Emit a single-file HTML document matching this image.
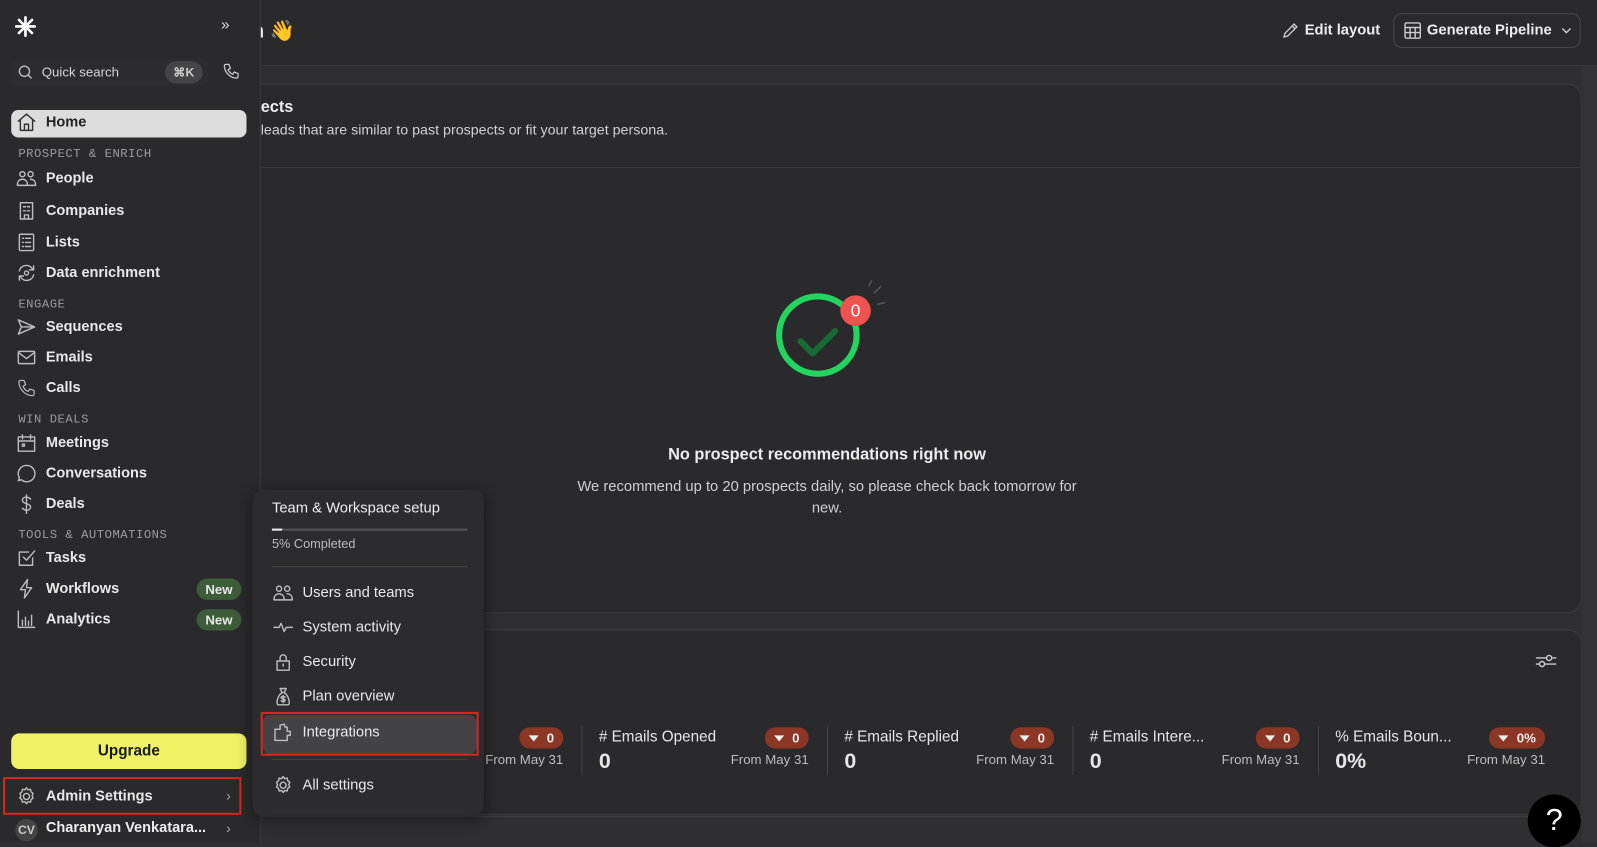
<!DOCTYPE html>
<html><head><meta charset="utf-8"><style>
*{margin:0;padding:0;box-sizing:border-box}
html,body{width:1597px;height:842px;overflow:hidden;background:#2f2f31}
#w{position:absolute;left:0;top:0;width:1568px;height:827px;transform:scale(1.0185);transform-origin:0 0;font-family:"Liberation Sans",sans-serif;color:#ececec;background:#2f2f31}
.a{position:absolute}
.top{left:0;top:0;width:1568px;height:65px;background:#2a2a2c;border-bottom:1px solid #3a3a3c}
.card{background:#2a2a2c;border:1px solid #3a3a3c;border-radius:14px}
.side{left:0;top:0;width:256px;height:827px;background:#2a2a2c;border-right:1px solid #3c3c3e}
.it{position:absolute;left:16px;height:22px;display:flex;align-items:center;font-size:14.3px;font-weight:bold;color:#e8e8e8;white-space:nowrap}
.it svg{width:20px;height:20px;margin-right:9px;fill:none;stroke:#bdbdbd;stroke-width:1.4;stroke-linecap:round;stroke-linejoin:round}
.sec{position:absolute;left:18px;font-family:"Liberation Mono",monospace;font-size:12px;color:#9c9c9c;letter-spacing:.5px}
.new{position:absolute;left:193px;width:44px;height:21px;border-radius:11px;background:#3d5c3a;color:#e6e6e6;font-size:13px;font-weight:bold;display:flex;align-items:center;justify-content:center}
.mi{position:absolute;left:268px;height:22px;display:flex;align-items:center;font-size:14.5px;color:#e8e8e8}
.mi svg{width:20px;height:20px;margin-right:9px;fill:none;stroke:#bdbdbd;stroke-width:1.4;stroke-linecap:round;stroke-linejoin:round}
.st{position:absolute;top:712px;width:206px;height:50px}
.st .t{position:absolute;left:0;top:3px;font-size:15px;color:#e6e6e6}
.st .v{position:absolute;left:0;top:24px;font-size:21px;font-weight:bold;color:#e6e6e6}
.st .b{position:absolute;right:0;top:2px;height:21px;padding:0 9px;border-radius:11px;background:#8c3626;color:#eee;font-size:13px;font-weight:bold;display:flex;align-items:center;gap:8px}
.st .b i{width:0;height:0;border-left:5px solid transparent;border-right:5px solid transparent;border-top:6px solid #eee}
.st .f{position:absolute;right:0;top:26px;font-size:13px;color:#bdbdbd}
.sep{position:absolute;top:713px;width:1px;height:48px;background:#444}
</style></head><body><div id="w">
<div class="a top"></div>
<div class="a" style="left:1553px;top:66px;width:15px;height:761px;background:#333335"></div>
<div class="a" style="left:236px;top:18px;font-size:20px;font-weight:bold">an 👋</div>
<div class="a" style="left:1258px;top:21px;font-size:14.5px;font-weight:bold;display:flex;align-items:center;gap:5px"><svg width="18" height="18" viewBox="0 0 20 20" fill="none" stroke="#ccc" stroke-width="1.5"><path d="M3 17l1-4L14 3l3 3L7 16z M12 5l3 3"/></svg>Edit layout</div>
<div class="a" style="left:1368px;top:13px;width:184px;height:34px;border:1px solid #4a4a4c;border-radius:8px;display:flex;align-items:center;padding-left:9px;font-size:14.5px;font-weight:bold;gap:5px;white-space:nowrap"><svg width="18" height="18" viewBox="0 0 18 18" fill="none" stroke="#ccc" stroke-width="1.4"><rect x="1.5" y="1.5" width="15" height="15" rx="1.5"/><path d="M1.5 6h15M1.5 11h15M6.5 6v10.5M11.5 6v10.5"/></svg>Generate Pipeline <svg width="10" height="6" viewBox="0 0 10 6" style="margin-left:4px" fill="none" stroke="#ccc" stroke-width="1.4"><path d="M1 1l4 4 4-4"/></svg></div>

<div class="a card" style="left:230px;top:82px;width:1323px;height:520px"></div>
<div class="a" style="left:231px;top:164px;width:1321px;height:1px;background:#3a3a3c"></div>
<div class="a" style="left:256px;top:97px;font-size:16px;font-weight:bold">ects</div>
<div class="a" style="left:256px;top:119px;font-size:14px;color:#d0d0d0">leads that are similar to past prospects or fit your target persona.</div>
<svg class="a" style="left:755px;top:275px" width="120" height="100" viewBox="0 0 120 100"><circle cx="48" cy="54" r="38" fill="none" stroke="#22d55f" stroke-width="6"/><path d="M31 60l12 12 22-22" fill="none" stroke="#176c36" stroke-width="6" stroke-linecap="round" stroke-linejoin="round"/><path d="M103 13l7-7M106 24l8-2M98 6l3-6" stroke="#555" stroke-width="1.5"/><circle cx="85" cy="30" r="15" fill="#ef5350"/><text x="85" y="36" font-family="Liberation Sans" font-size="17" fill="#fff" text-anchor="middle">0</text></svg>
<div class="a" style="left:560px;top:438px;width:504px;text-align:center;font-size:16px;font-weight:bold">No prospect recommendations right now</div>
<div class="a" style="left:555px;top:468px;width:514px;text-align:center;font-size:14.5px;color:#cfcfcf;line-height:21px">We recommend up to 20 prospects daily, so please check back tomorrow for new.</div>

<div class="a card" style="left:230px;top:618px;width:1323px;height:182px"></div>
<div class="a" style="left:230px;top:801px;width:1323px;height:1px;background:#3f3f41"></div>
<svg class="a" style="left:1507px;top:640px" width="22" height="18" viewBox="0 0 22 18" fill="none" stroke="#ccc" stroke-width="1.4"><path d="M1 6h10M17 6h4M1 12h3M10 12h11"/><circle cx="14" cy="6" r="2.5"/><circle cx="7" cy="12" r="2.5"/></svg>
<div class="st" style="left:347px"><div class="b"><i></i>0</div><div class="f">From May 31</div></div>
<div class="sep" style="left:571px"></div>
<div class="st" style="left:588px"><div class="t"># Emails Opened</div><div class="v">0</div><div class="b"><i></i>0</div><div class="f">From May 31</div></div>
<div class="sep" style="left:812px"></div>
<div class="st" style="left:829px"><div class="t"># Emails Replied</div><div class="v">0</div><div class="b"><i></i>0</div><div class="f">From May 31</div></div>
<div class="sep" style="left:1053px"></div>
<div class="st" style="left:1070px"><div class="t"># Emails Intere...</div><div class="v">0</div><div class="b"><i></i>0</div><div class="f">From May 31</div></div>
<div class="sep" style="left:1294px"></div>
<div class="st" style="left:1311px"><div class="t">% Emails Boun...</div><div class="v">0%</div><div class="b"><i></i>0%</div><div class="f">From May 31</div></div>
<div class="a" style="left:1500px;top:780px;width:52px;height:52px;border-radius:50%;background:#000;color:#fff;font-size:30px;display:flex;align-items:center;justify-content:center">?</div>

<div class="a side"></div>
<svg class="a" style="left:14px;top:15px" width="22" height="22" viewBox="0 0 22 22" stroke="#fff" stroke-width="2.6" stroke-linecap="round"><path d="M11 2v18M2 11h18M4.6 4.6l12.8 12.8M17.4 4.6L4.6 17.4"/></svg>
<div class="a" style="left:217px;top:16px;font-size:15px;color:#ddd">»</div>
<div class="a" style="left:10px;top:57px;width:195px;height:28px;border-radius:8px;background:#2c2c2e"></div>
<svg class="a" style="left:17px;top:63px" width="16" height="16" viewBox="0 0 16 16" fill="none" stroke="#bbb" stroke-width="1.4"><circle cx="7" cy="7" r="5"/><path d="M11 11l3 3"/></svg>
<div class="a" style="left:41px;top:63px;font-size:13px;color:#d5d5d5">Quick search</div>
<div class="a" style="left:162px;top:60px;width:37px;height:22px;border-radius:11px;background:#454547;font-size:12px;font-weight:bold;color:#ccc;display:flex;align-items:center;justify-content:center">⌘K</div>
<svg class="a" style="left:218px;top:61px" width="18" height="18" viewBox="0 0 24 24" fill="none" stroke="#ccc" stroke-width="1.6"><path d="M5 3h4l2 5-3 2a11 11 0 006 6l2-3 5 2v4a2 2 0 01-2 2A17 17 0 013 5a2 2 0 012-2z"/></svg>
<div class="a" style="left:11px;top:108px;width:231px;height:27px;border-radius:7px;background:#dcdcdc"></div>
<div class="it" style="top:109px;color:#222"><svg viewBox="0 0 20 20" style="stroke:#333"><path d="M2 9l8-7 8 7M4 7.5V18h12V7.5M8 18v-6h4v6"/></svg>Home</div>
<div class="sec" style="top:144px">PROSPECT &amp; ENRICH</div>
<div class="it" style="top:164px"><svg viewBox="0 0 20 20"><circle cx="6" cy="6" r="2.5"/><circle cx="14" cy="6" r="2.5"/><path d="M1 17c0-4 2-6 5-6s5 2 5 6zM11 17h8c0-4-2-6-5-6"/></svg>People</div>
<div class="it" style="top:196px"><svg viewBox="0 0 20 20"><rect x="4" y="2" width="12" height="16"/><path d="M7 6h2M11 6h2M7 10h2M11 10h2M8 18v-4h4v4"/></svg>Companies</div>
<div class="it" style="top:227px"><svg viewBox="0 0 20 20"><rect x="3" y="2" width="14" height="16" rx="1"/><path d="M6 6h1M9 6h5M6 10h1M9 10h5M6 14h1M9 14h5"/></svg>Lists</div>
<div class="it" style="top:257px"><svg viewBox="0 0 20 20"><path d="M3 8a7 7 0 0112-3l2 2M17 12a7 7 0 01-12 3l-2-2M17 3v4h-4M3 17v-4h4"/><circle cx="10" cy="10" r="2"/></svg>Data enrichment</div>
<div class="sec" style="top:292px">ENGAGE</div>
<div class="it" style="top:310px"><svg viewBox="0 0 20 20"><path d="M2 3l16 7-16 7 3-7zM5 10h13"/></svg>Sequences</div>
<div class="it" style="top:340px"><svg viewBox="0 0 20 20"><rect x="2" y="4" width="16" height="12" rx="1"/><path d="M2 5l8 6 8-6"/></svg>Emails</div>
<div class="it" style="top:370px"><svg viewBox="0 0 24 24"><path d="M5 3h4l2 5-3 2a11 11 0 006 6l2-3 5 2v4a2 2 0 01-2 2A17 17 0 013 5a2 2 0 012-2z"/></svg>Calls</div>
<div class="sec" style="top:405px">WIN DEALS</div>
<div class="it" style="top:424px"><svg viewBox="0 0 20 20"><rect x="2" y="4" width="16" height="14"/><path d="M2 8h16M6 2v4M14 2v4"/><rect x="6" y="11" width="2" height="2"/></svg>Meetings</div>
<div class="it" style="top:454px"><svg viewBox="0 0 20 20"><path d="M10 2a8 8 0 11-5 14l-3 1 1-3A8 8 0 0110 2z"/></svg>Conversations</div>
<div class="it" style="top:484px"><svg viewBox="0 0 20 20"><path d="M14 5c-1-1-2-2-4-2s-4 1-4 3 2 3 4 3.5 4 1.5 4 3.5-2 3-4 3-3-1-4-2M10 1v18"/></svg>Deals</div>
<div class="sec" style="top:518px">TOOLS &amp; AUTOMATIONS</div>
<div class="it" style="top:537px"><svg viewBox="0 0 20 20"><path d="M16 10v7H3V4h9M7 9l3 3 8-9"/></svg>Tasks</div>
<div class="it" style="top:567px"><svg viewBox="0 0 20 20"><path d="M11 1L4 11h5l-1 8 7-10h-5z"/></svg>Workflows</div>
<div class="new" style="top:568px">New</div>
<div class="it" style="top:597px"><svg viewBox="0 0 20 20"><path d="M2 2v16h16M6 16v-5M9 16V8M12 16v-4M15 16V6"/></svg>Analytics</div>
<div class="new" style="top:598px">New</div>
<div class="a" style="left:11px;top:720px;width:231px;height:35px;border-radius:8px;background:#eef264;color:#1a1a1a;font-size:15px;font-weight:bold;display:flex;align-items:center;justify-content:center">Upgrade</div>
<div class="a" style="left:3px;top:763px;width:234px;height:37px;border:2px solid #d6281c"></div>
<div class="it" style="top:771px"><svg viewBox="0 0 20 20"><circle cx="10" cy="10" r="3"/><path d="M10 1.5l1.5 2 2.5-.5.5 2.5 2 1.5-1 2.3 1 2.3-2 1.5-.5 2.5-2.5-.5-1.5 2-1.5-2-2.5.5-.5-2.5-2-1.5 1-2.3-1-2.3 2-1.5.5-2.5 2.5.5z"/></svg>Admin Settings</div>
<div class="a" style="left:222px;top:773px;color:#aaa;font-size:14px">›</div>
<div class="a" style="left:15px;top:804px;width:22px;height:22px;border-radius:50%;background:#444;color:#ccc;font-size:12px;font-weight:bold;display:flex;align-items:center;justify-content:center">CV</div>
<div class="a" style="left:45px;top:805px;font-size:14.3px;font-weight:bold">Charanyan Venkatara...</div>
<div class="a" style="left:222px;top:805px;color:#aaa;font-size:14px">›</div>

<div class="a" style="left:248px;top:481px;width:227px;height:320px;background:#2c2c2e;border-radius:10px;box-shadow:0 4px 16px rgba(0,0,0,.45)"></div>
<div class="a" style="left:267px;top:491px;font-size:14.5px">Team &amp; Workspace setup</div>
<div class="a" style="left:267px;top:519px;width:192px;height:2px;background:#555"></div>
<div class="a" style="left:267px;top:519px;width:10px;height:2px;background:#eee"></div>
<div class="a" style="left:267px;top:527px;font-size:12.5px;color:#bbb">5% Completed</div>
<div class="a" style="left:267px;top:556px;width:192px;height:1px;background:#444"></div>
<div class="mi" style="top:571px"><svg viewBox="0 0 20 20"><circle cx="6" cy="6" r="2.5"/><circle cx="14" cy="6" r="2.5"/><path d="M1 17c0-4 2-6 5-6s5 2 5 6zM11 17h8c0-4-2-6-5-6"/></svg>Users and teams</div>
<div class="mi" style="top:605px"><svg viewBox="0 0 20 20"><path d="M1 10h5l2-4 3 8 2-4h6"/></svg>System activity</div>
<div class="mi" style="top:639px"><svg viewBox="0 0 20 20"><rect x="4" y="9" width="12" height="9"/><path d="M7 9V6a3 3 0 016 0v3M10 12v2"/></svg>Security</div>
<div class="mi" style="top:673px"><svg viewBox="0 0 20 20"><path d="M7 2h6l-2 4h-2zM9 6C4 9 3 18 5 18h10c2 0 1-9-4-12M10 9v7M12 10.5c-1-1-4-1-4 .5s4 1 4 2.5-3 1.5-4 .5"/></svg>Plan overview</div>
<div class="a" style="left:258px;top:702px;width:210px;height:38px;border-radius:7px;background:#434345"></div>
<div class="a" style="left:256px;top:699px;width:214px;height:43px;border:2px solid #d6281c"></div>
<div class="mi" style="top:708px"><svg viewBox="0 0 20 20"><path d="M2 7h5V3l4-1 1 3h2v4h3v4h-3v5H2z"/></svg>Integrations</div>
<div class="a" style="left:267px;top:745px;width:192px;height:1px;background:#444"></div>
<div class="mi" style="top:760px"><svg viewBox="0 0 20 20"><circle cx="10" cy="10" r="3"/><path d="M10 1.5l1.5 2 2.5-.5.5 2.5 2 1.5-1 2.3 1 2.3-2 1.5-.5 2.5-2.5-.5-1.5 2-1.5-2-2.5.5-.5-2.5-2-1.5 1-2.3-1-2.3 2-1.5.5-2.5 2.5.5z"/></svg>All settings</div>
</div></body></html>
